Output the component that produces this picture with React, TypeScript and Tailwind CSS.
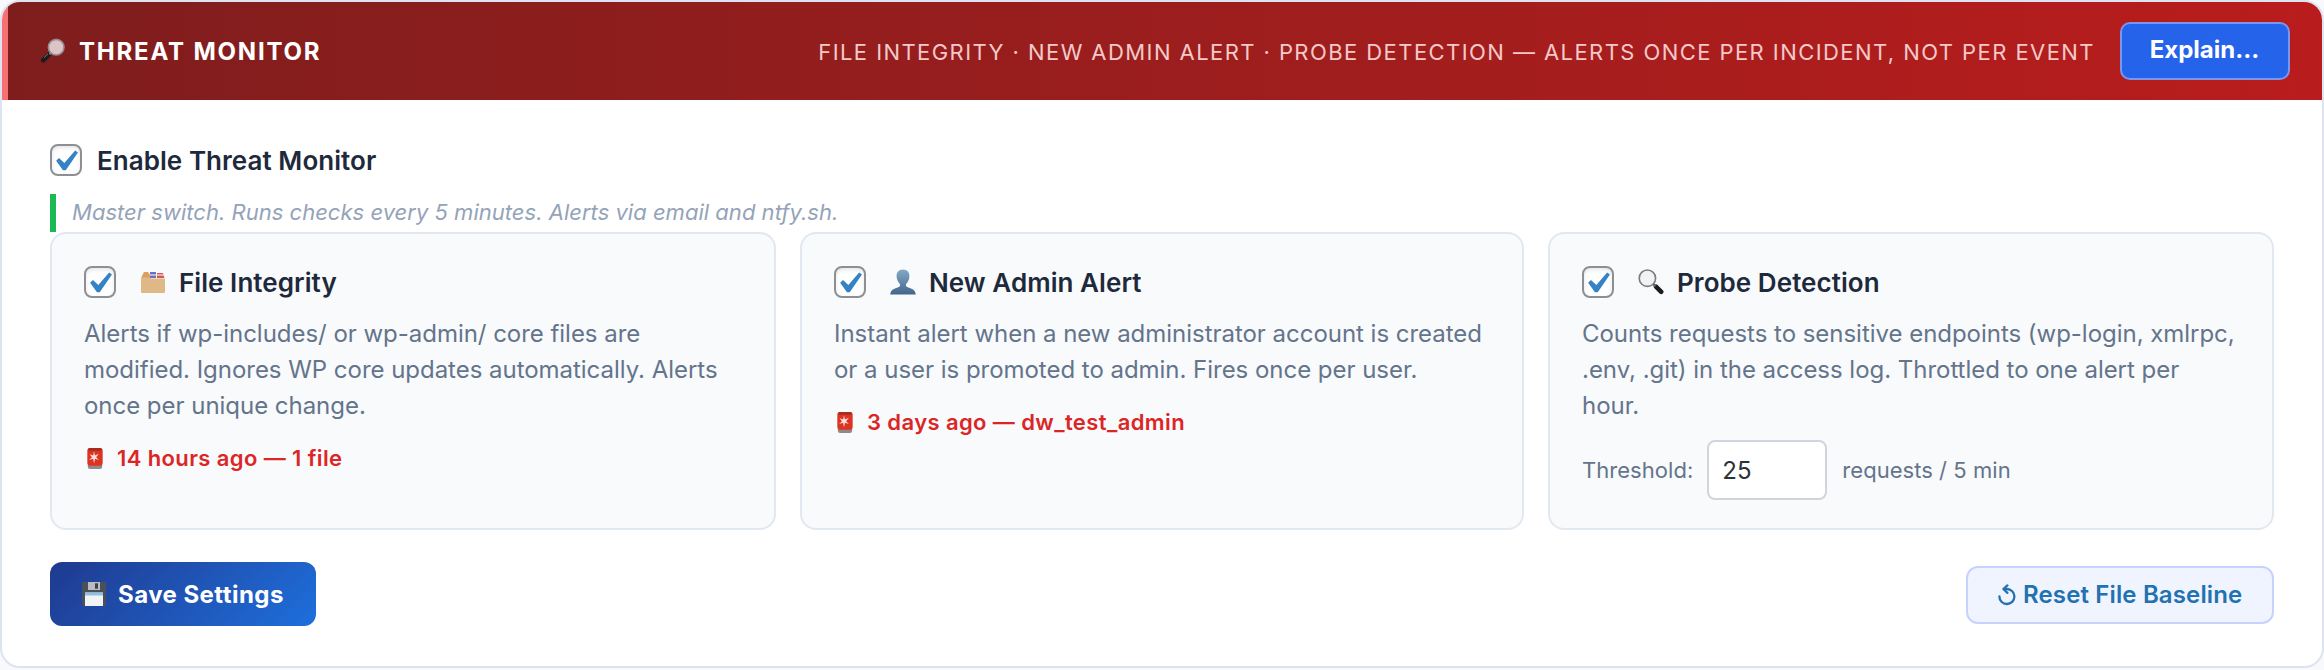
import React, { useState } from 'react';

type IconProps = { className?: string };

// Magnifier with the lens on the right, used in the panel header
const ProbeRightIcon = ({ className }: IconProps) => (
  <svg viewBox="0 0 26 26" className={className} fill="none">
    <path d="M9 16.6 L3.2 22.4" stroke="#1c1c1e" strokeWidth="4.6" strokeLinecap="round" />
    <path d="M4.2 19.6 L8 15.8" stroke="#7d7d82" strokeWidth="1" />
    <path d="M12 13.6 L9.5 16.2" stroke="#8b8b90" strokeWidth="2.2" />
    <circle cx="16.2" cy="9.2" r="7.8" fill="#dcc3c6" stroke="#948a92" strokeWidth="1.6" />
  </svg>
);

const ProbeLeftIcon = ({ className }: IconProps) => (
  <svg viewBox="0 0 26 26" className={className} fill="none">
    <path d="M18 17.6 L23.2 22.8" stroke="#1c1c1e" strokeWidth="4.6" strokeLinecap="round" />
    <path d="M14.6 14.4 L17.6 17.4" stroke="#5d5d62" strokeWidth="2.2" />
    <circle cx="9.4" cy="9.2" r="8.2" fill="#f1f2f4" stroke="#7c7d82" strokeWidth="1.6" />
  </svg>
);

const DividersIcon = ({ className }: IconProps) => (
  <svg viewBox="0 0 26 26" className={className}>
    <path d="M1.5 8 L4 3 H8 L10 6 V10 H1.5 Z" fill="#dba05f" />
    <path d="M10 3 H16 V9 H10 Z" fill="#6a6fc0" />
    <path d="M17 4 H23 L24.4 9 H17 Z" fill="#d9534f" />
    <path d="M10 6 H24" stroke="#f3e6e0" strokeWidth="1.2" />
    <path d="M1 8.5 H9 L11 9.6 H25 V23 Q25 24 24 24 H2 Q1 24 1 23 Z" fill="#deb887" />
  </svg>
);

const BustIcon = ({ className }: IconProps) => (
  <svg viewBox="0 0 26 26" className={className}>
    <defs>
      <linearGradient id="bust" x1="0" y1="0" x2="0" y2="1">
        <stop offset="0" stopColor="#84aac8" />
        <stop offset="1" stopColor="#42658b" />
      </linearGradient>
    </defs>
    <path
      d="M13 .5 C17.4 .5 19.6 3.6 19.4 7.6 C19.2 11 17.6 13.6 16 15 V17.2 C18 19 25.5 19 25.8 25.5 H.2 C.5 19 8 19 10 17.2 V15 C8.4 13.6 6.8 11 6.6 7.6 C6.4 3.6 8.6 .5 13 .5 Z"
      fill="url(#bust)"
    />
  </svg>
);

const SirenIcon = ({ className }: IconProps) => (
  <svg viewBox="0 0 18 24" className={className}>
    <rect x="1.5" y="17" width="15" height="6" rx="2.4" fill="#94898a" />
    <rect x="1" y="1" width="16" height="18.5" rx="3" fill="#dc3322" />
    <rect x="2" y="1" width="14" height="3" rx="1.5" fill="#a82a20" />
    <path d="M8 4.5 L8.9 8.8 L13 7 L10.2 10.6 L13 13.6 L9 12.2 L8 17 L7 12.2 L3 13.6 L5.8 10.6 L3.4 7.6 L7.1 8.8 Z" fill="#ffe3dc" />
  </svg>
);

const FloppyIcon = ({ className }: IconProps) => (
  <svg viewBox="0 0 24 24" className={className}>
    <path d="M0 0 H24 V24 H1.5 L0 22.5 Z" fill="#48505a" />
    <rect x="6" y="0" width="12" height="8" fill="#b9bdc1" />
    <rect x="13" y="1.3" width="3" height="5.4" fill="#3b424a" />
    <rect x="3" y="10.5" width="18" height="13.5" fill="#f1f4f7" />
    <rect x="3" y="10.5" width="18" height="3" fill="#8fc0e6" />
  </svg>
);

const ResetIcon = ({ className }: IconProps) => (
  <svg viewBox="0 0 18 22" className={className} fill="none" stroke="currentColor" strokeWidth="2.3" strokeLinecap="round" strokeLinejoin="round">
    <path d="M1.4 12.4 A7.5 7.5 0 1 0 8.9 5 H6" />
    <path d="M9.4 1.4 L5.4 5 L9.4 8.8" />
  </svg>
);

type CheckboxProps = { checked: boolean; onChange: (value: boolean) => void };

const Checkbox = ({ checked, onChange }: CheckboxProps) => (
  <button
    type="button"
    role="checkbox"
    aria-checked={checked}
    onClick={() => onChange(!checked)}
    className="flex size-8 shrink-0 items-center justify-center rounded-lg border-2 border-[#8c8f94] bg-white shadow-[inset_0_2px_4px_rgba(0,0,0,0.1)]"
  >
    {checked && (
      <svg viewBox="3.81 2.7 13.33 13.33" className="size-7 shrink-0">
        <path d="M14.83 4.89l1.34.94-5.81 8.38H9.02L5.78 9.67l1.34-1.25 2.57 2.4z" fill="#3582c4" />
      </svg>
    )}
  </button>
);

type MonitorCardProps = {
  title: string;
  icon: React.ReactNode;
  lines: string[];
  children?: React.ReactNode;
};

const MonitorCard = ({ title, icon, lines, children }: MonitorCardProps) => {
  const [enabled, setEnabled] = useState(true);

  return (
    <div className="h-[298px] rounded-2xl border-2 border-[#e2e8f0] bg-[#f8fafc] px-8 pt-8">
      <div className="flex h-8 items-center">
        <Checkbox checked={enabled} onChange={setEnabled} />
        <span className="ml-6 flex w-[39px]">{icon}</span>
        <h3 className="pt-0.5 text-[26px] leading-8 font-semibold tracking-[0.06px] text-[#1e293b]">{title}</h3>
      </div>
      <p className="mt-[18px] text-[24px] leading-9 tracking-[-0.03px] whitespace-nowrap text-[#64748b]">
        {lines.map((line) => (
          <span key={line} className="block">{line}</span>
        ))}
      </p>
      {children}
    </div>
  );
};

const LastAlert = ({ text }: { text: string }) => (
  <div className="mt-4 flex h-9 items-center text-[22px] font-semibold tracking-[0.4px] text-[#dc2626]">
    <SirenIcon className="mr-[13px] ml-0.5 h-[23px] w-[18px]" />
    <span>{text}</span>
  </div>
);

const App = () => {
  const [enabled, setEnabled] = useState(true);
  const [threshold, setThreshold] = useState('25');

  return (
    <div className="h-[670px] w-[2324px] bg-[#f8f9fc] font-['Inter',sans-serif]">
      <div className="h-[668px] overflow-hidden rounded-[20px] border-2 border-[#dde3f0] bg-white">
        {/* Header */}
        <div className="flex h-[98px] items-center border-l-6 border-[#f87171] bg-linear-to-r from-[#7f1d1d] to-[#b91c1c] pr-8 pl-8">
          <ProbeRightIcon className="size-[26px]" />
          <h2 className="ml-[13px] pt-0.5 text-[24px] font-bold tracking-[1.8px] text-white">THREAT MONITOR</h2>
          <p className="mr-[25px] ml-auto pt-0.5 text-[22px] tracking-[1.43px] text-[#f5c9c9]">
            FILE INTEGRITY · NEW ADMIN ALERT · PROBE DETECTION — ALERTS ONCE PER INCIDENT, NOT PER EVENT
          </p>
          <button className="h-[58px] w-[170px] rounded-[10px] border-2 border-[#7a96ee] bg-[#2563eb] pr-px pb-0.5 text-[24px] font-bold text-white">
            Explain...
          </button>
        </div>

        {/* Settings */}
        <div className="px-12 pt-[42px]">
          <div className="flex h-[36px] items-center">
            <Checkbox checked={enabled} onChange={setEnabled} />
            <span className="ml-[15px] text-[26px] font-semibold tracking-[0.05px] text-[#1e293b]">Enable Threat Monitor</span>
          </div>
          <p className="mt-4 flex h-[38px] items-center border-l-6 border-[#1db954] pb-0.5 pl-4 text-[22px] tracking-[0.02px] text-[#94a3b8] italic">
            Master switch. Runs checks every 5 minutes. Alerts via email and ntfy.sh.
          </p>

          <div className="grid grid-cols-[726px_724px_726px] gap-6">
            <MonitorCard
              title="File Integrity"
              icon={<DividersIcon className="size-[26px]" />}
              lines={[
                'Alerts if wp-includes/ or wp-admin/ core files are',
                'modified. Ignores WP core updates automatically. Alerts',
                'once per unique change.',
              ]}
            >
              <LastAlert text="14 hours ago — 1 file" />
            </MonitorCard>
            <MonitorCard
              title="New Admin Alert"
              icon={<BustIcon className="size-[26px]" />}
              lines={[
                'Instant alert when a new administrator account is created',
                'or a user is promoted to admin. Fires once per user.',
              ]}
            >
              <LastAlert text="3 days ago — dw_test_admin" />
            </MonitorCard>
            <MonitorCard
              title="Probe Detection"
              icon={<ProbeLeftIcon className="size-[26px]" />}
              lines={[
                'Counts requests to sensitive endpoints (wp-login, xmlrpc,',
                '.env, .git) in the access log. Throttled to one alert per',
                'hour.',
              ]}
            >
              <div className="mt-4 flex items-center text-[22px] tracking-[0.04px] text-[#64748b]">
                <label htmlFor="threshold">Threshold:</label>
                <input
                  id="threshold"
                  value={threshold}
                  onChange={(e) => setThreshold(e.target.value)}
                  className="mr-[15px] ml-[14px] h-[60px] w-[120px] rounded-lg border-2 border-[#d1d5db] bg-white px-[13px] text-[24px] text-[#2c3338]"
                />
                <span>requests / 5 min</span>
              </div>
            </MonitorCard>
          </div>

          <div className="mt-8 flex h-16 items-center justify-between">
            <button className="flex h-16 w-[266px] items-center rounded-xl bg-linear-135 from-[#1e3a8f] to-[#1d6fdc] pl-8 text-[24px] font-bold tracking-[0.45px] text-white">
              <FloppyIcon className="mr-3 size-6" />
              <span className="pt-0.5">Save Settings</span>
            </button>
            <button className="mt-0.5 flex h-[58px] w-[308px] items-center rounded-xl border-2 border-[#c7d2fe] bg-[#f0f4ff] pl-[30px] text-[24px] font-semibold tracking-[0.14px] text-[#2271b1]">
              <ResetIcon className="mr-[7px] h-[22px] w-[18px]" />
              <span>Reset File Baseline</span>
            </button>
          </div>
        </div>
      </div>
    </div>
  );
};

export default App;
